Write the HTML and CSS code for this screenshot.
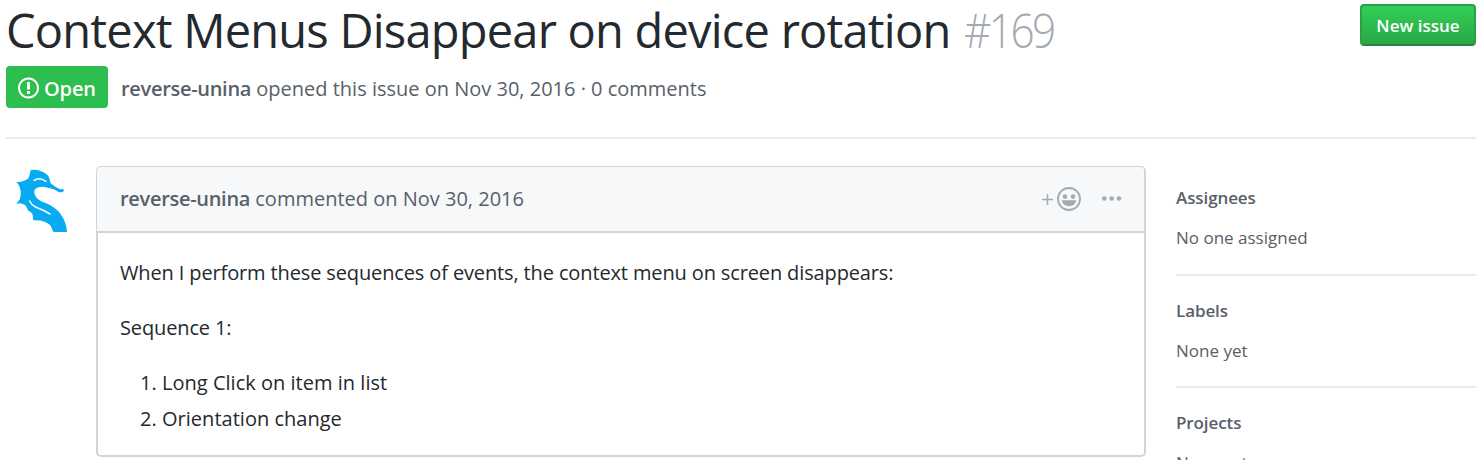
FILE: index.html
```html
<!DOCTYPE html>
<html lang="en">
<head>
<meta charset="utf-8">
<title>Context Menus Disappear on device rotation · Issue #169</title>
<link rel="stylesheet" href="styles.css">
</head>
<body>
<main class="page">
  <header class="issue-header">
    <div class="title-row">
      <h1 class="title"><span class="title-text">Context Menus Disappear on device rotation</span> <span class="number">#169</span></h1>
      <button class="new-issue" type="button">New issue</button>
    </div>
    <div class="meta-row">
      <span class="state">
        <svg class="state-icon" viewBox="0 0 14 16" aria-hidden="true"><path fill="currentColor" fill-rule="evenodd" d="M7 2.3c3.14 0 5.7 2.56 5.7 5.7s-2.56 5.7-5.7 5.7A5.71 5.71 0 0 1 1.3 8c0-3.14 2.56-5.7 5.7-5.7zM7 1C3.14 1 0 4.14 0 8s3.14 7 7 7 7-3.14 7-7-3.14-7-7-7zm1 3H6v5h2V4zm0 6H6v2h2v-2z"/></svg>
        <span class="state-text">Open</span>
      </span>
      <p class="meta"><strong class="author">reverse-unina</strong> opened this issue on Nov 30, 2016 · 0 comments</p>
    </div>
  </header>
  <div class="columns">
    <svg class="avatar" viewBox="0 0 66 66" aria-hidden="true">
      <path fill="#08aaf2" d="M24.700 4Q31 3 37 6Q43 9 43.500 13L44.700 17.300Q49 21 54 23.300L57.300 23Q58.500 25 56.700 26.300H53.300Q48 23 44 22.300L37 20.700Q30 21 28.500 24C27.500 27 29 30.500 32 33.300C36 36 39 36.500 44 39C49 42 52 44.500 54 47.300Q60.500 56 61 66H47.300Q46 62 44 59Q38 53.500 27.300 54.300L26.700 49Q26 46 22.300 44.700Q21 41 19 39Q15 36.500 10 37.700Q14 34 14 32.300Q15 29 14.700 25.700Q14 19 10 15.700Q14 16.500 18 14.700Q23 13 23.300 10Z"/>
      <path fill="none" stroke="#fff" stroke-width="1.5" stroke-linecap="round" d="M28 14.500q5-4 12 .800M23.500 35q2 4 6 6 8 3 14.500 7"/>
    </svg>
    <article class="comment">
      <div class="comment-header">
        <p class="meta"><strong class="author">reverse-unina</strong> commented on Nov 30, 2016</p>
        <div class="actions">
          <svg class="plus" viewBox="0 0 11 11" aria-hidden="true"><path stroke="currentColor" stroke-width="1.500" d="M5.500 0v11M0 5.500h11"/></svg>
          <svg class="smiley" viewBox="0 0 24 24" aria-hidden="true"><circle cx="12" cy="12" r="11" fill="none" stroke="currentColor" stroke-width="1.800"/><g fill="currentColor"><circle cx="8" cy="9.600" r="2.300"/><circle cx="16" cy="9.600" r="2.300"/><path d="M4.700 13.300h14.600c-.7 3.800-3.700 5.900-7.300 5.900s-6.600-2.100-7.300-5.900z"/></g></svg>
          <svg class="dots" viewBox="0 0 20 6" aria-hidden="true"><g fill="currentColor"><circle cx="2.300" cy="2.500" r="2.300"/><circle cx="9.700" cy="2.500" r="2.300"/><circle cx="17" cy="2.500" r="2.300"/></g></svg>
        </div>
      </div>
      <div class="comment-body">
        <p class="intro">When I perform these sequences of events, the context menu on screen disappears:</p>
        <p class="intro">Sequence 1:</p>
        <ol class="steps">
          <li>Long Click on item in list</li>
          <li>Orientation change</li>
        </ol>
      </div>
    </article>
    <aside class="sidebar">
      <section class="side-item"><h2 class="side-title">Assignees</h2><p class="side-value">No one assigned</p></section>
      <section class="side-item"><h2 class="side-title">Labels</h2><p class="side-value">None yet</p></section>
      <section class="side-item"><h2 class="side-title">Projects</h2><p class="side-value">None yet</p></section>
    </aside>
  </div>
</main>
</body>
</html>
```
FILE: styles.css
```css
* { box-sizing: border-box; }
body { margin: 0; height: 460px; overflow: hidden; background: #fff; color: #24292e; font-family: "Open Sans", "Noto Sans", sans-serif; font-size: 20px; }
h1, h2, p, ol { margin: 0; }
.page { padding: 0 3px 0 6px; }
.issue-header { height: 139px; border-bottom: 2px solid #e6ebf1; }
.title-row { display: flex; justify-content: space-between; align-items: flex-start; height: 66px; }
.title { font-size: 47px; font-weight: 400; line-height: 60px; letter-spacing: -0.78px; white-space: nowrap; }
.number { display: inline-block; margin-left: 2px; color: #a3aab1; font-weight: 300; letter-spacing: -2.8px; transform: scaleX(0.9); transform-origin: left; }
.new-issue { height: 42px; width: 116px; margin-top: 4px; padding: 1px 0 0; border: 2px solid #2ba147; border-bottom-color: #25873a; border-radius: 4px; background: linear-gradient(#34d058, #28a745) border-box; color: #fff; font: 600 17px/37px "Open Sans", sans-serif; white-space: nowrap; }
.meta-row { display: flex; align-items: center; gap: 13px; height: 42px; }
.meta-row .meta { padding-top: 4px; }
.state { display: flex; align-items: center; gap: 5px; width: 102px; height: 42px; padding-left: 12px; border-radius: 4px; background: #2cbe4e; color: #fff; font-weight: 600; }
.state-icon { width: 21px; height: 24px; margin-top: 2px; }
.state-text { padding-top: 2px; letter-spacing: -0.15px; }
.meta { color: #586069; line-height: 30px; white-space: nowrap; }
.author { font-weight: 600; letter-spacing: -0.3px; }
.columns { display: grid; grid-template-columns: 90px 1050px 300px; padding-top: 27px; }
.avatar { width: 66px; height: 66px; }
.comment { display: flex; flex-direction: column; height: 291px; }
.comment-header { display: flex; flex: none; justify-content: space-between; align-items: center; height: 67px; padding: 0 22px 0 23px; border: 2px solid #d1d5da; border-top-width: 1px; border-left-width: 1px; border-radius: 5px 5px 0 0; background: #f6f8fa; }
.actions { display: flex; align-items: center; color: #a3aab1; }
.plus { width: 11px; height: 11px; margin-right: 4px; }
.smiley { width: 24px; height: 24px; margin-right: 21px; }
.dots { width: 20px; height: 6px; }
.comment-body { flex: none; height: 224px; padding: 22px; border: 2px solid #d1d5da; border-top: 0; border-radius: 0 0 5px 5px; line-height: 36px; }
.intro { margin-bottom: 19px; letter-spacing: -0.13px; }
.steps { padding-left: 42px; letter-spacing: 0.02px; }
.sidebar { margin-left: 30px; width: 300px; padding-top: 18px; color: #586069; font-size: 17px; }
.side-item { height: 90px; }
.side-item + .side-item { height: 112px; border-top: 2px solid #e6ebf1; padding-top: 21px; }
.side-title { font-size: 17px; font-weight: 600; line-height: 27px; margin-bottom: 13px; letter-spacing: -0.1px; }
.side-value { line-height: 27px; }
```
